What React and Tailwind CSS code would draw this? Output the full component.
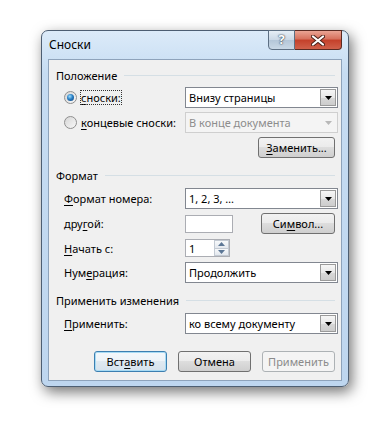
import React from 'react';

const Ul = ({ children }) => <span className="underline underline-offset-[2px]">{children}</span>;

const Arrow = ({ color = '#000' }) => (
  <svg width="7" height="4" viewBox="0 0 7 4"><path d="M0 0h7L3.5 4z" fill={color} /></svg>
);

const Select = ({ value, disabled }) => (
  <div
    className={`flex h-[21px] w-[153px] items-stretch border ${
      disabled ? 'border-[#cfcfcf] bg-[#f4f4f4] text-[#8d8d8d]' : 'border-[#828790] bg-white text-black'
    }`}
  >
    <div className="flex flex-1 items-center pl-[3px] leading-none">{value}</div>
    <div
      className={`m-[1px] flex w-[16px] items-center justify-center border ${
        disabled
          ? 'border-[#f4f4f4]'
          : 'border-[#9a9a9a] bg-[linear-gradient(180deg,#f6f6f6_0%,#e8e8e8_50%,#d8d8d8_51%,#cdcdcd_100%)]'
      }`}
    >
      <Arrow color={disabled ? '#b8b8b8' : '#000'} />
    </div>
  </div>
);

const Btn = ({ children, primary, disabled, w = 'w-[73px]' }) => {
  let look =
    'border-[#707070] bg-[linear-gradient(180deg,#f2f2f2_0%,#ebebeb_49%,#dddddd_50%,#cfcfcf_100%)] text-black';
  if (primary)
    look =
      'border-[#3c7fb1] bg-[linear-gradient(180deg,#f4f8fb_0%,#edf3f8_49%,#dfe9f1_50%,#d6e2ec_100%)] shadow-[inset_0_0_0_1px_#a8dbf4] text-black';
  if (disabled) look = 'border-[#adb2b5] bg-[#f4f4f4] text-[#8b8b8b]';
  return (
    <div className={`flex h-[21px] ${w} items-center justify-center rounded-[3px] border leading-none ${look}`}>
      {children}
    </div>
  );
};

const Radio = ({ checked, children }) => (
  <div className="flex items-center gap-[4px]">
    <div className="flex h-[13px] w-[13px] items-center justify-center rounded-full border border-[#8f8f8f] bg-[linear-gradient(135deg,#d6d6d6,#f8f8f8)]">
      {checked && (
        <div className="h-[7px] w-[7px] rounded-full bg-[radial-gradient(circle_at_40%_35%,#9fe0ff_0%,#2a7fc4_45%,#0c3d78_100%)]" />
      )}
    </div>
    {children}
  </div>
);

const GroupTitle = ({ children, className }) => (
  <div className={`flex h-[16px] items-center pl-[7px] pr-[6px] ${className}`}>
    <span className="leading-none">{children}</span>
    <div className="ml-[7px] h-px flex-1 bg-[#d5dfe5]" />
  </div>
);

const Row = ({ label, children, className = '' }) => (
  <div className={`flex items-center pl-[15px] ${className}`}>
    <div className="w-[121px] leading-none">{label}</div>
    {children}
  </div>
);

export default function App() {
  return (
    <div className="h-[425px] w-[386px] overflow-hidden bg-white pl-[41px] pt-[30px] font-['Noto_Sans',sans-serif] text-[11px] text-black">
      <div className="flex h-[357px] w-[308px] flex-col rounded-[7px] border border-[#4d5e72] bg-[linear-gradient(180deg,#dcebf9_0%,#c6dcf2_12%,#bed6ef_100%)] px-[6px] pb-[5px] shadow-[3px_5px_14px_rgba(0,0,0,0.55)]">
        <div className="flex h-[28px] justify-between">
          <div className="pl-[1px] pt-[6px] text-[12px] leading-[16px]">Сноски</div>
          <div className="-mt-px flex h-[20px]">
            <div className="flex w-[27px] items-center justify-center rounded-bl-[4px] border border-[#5d6f83] bg-[linear-gradient(180deg,#e6eef6_0%,#cad8e6_50%,#b4c6d8_51%,#c9d8e6_100%)] text-[13px] font-bold text-white [text-shadow:0_0_2px_#2b3a4a,0_0_1px_#2b3a4a]">
              ?
            </div>
            <div className="flex w-[47px] items-center justify-center rounded-br-[4px] border border-l-0 border-[#5a2a22] bg-[linear-gradient(180deg,#eaa494_0%,#d6705c_45%,#c4402a_50%,#d0604a_100%)]">
              <svg width="14" height="11" viewBox="0 0 14 11">
                <path d="M2 1.5l10 8M12 1.5l-10 8" stroke="#4a2018" strokeWidth="4" strokeLinecap="round" />
                <path d="M2 1.5l10 8M12 1.5l-10 8" stroke="#fff" strokeWidth="2.2" strokeLinecap="round" />
              </svg>
            </div>
          </div>
        </div>

        <div className="flex flex-1 flex-col border border-[#8ea3bb] bg-[#f0f0f0]">
          <GroupTitle className="mt-[7px]">Положение</GroupTitle>
          <Row
            className="mt-[4px] h-[21px]"
            label={
              <Radio checked>
                <span className="outline-1 outline-dotted outline-[#333] outline-offset-[0px] leading-[13px]">
                  <Ul>с</Ul>носки:
                </span>
              </Radio>
            }
          >
            <Select value="Внизу страницы" />
          </Row>
          <Row
            className="mt-[4px] h-[21px]"
            label={
              <Radio>
                <span>
                  <Ul>к</Ul>онцевые сноски:
                </span>
              </Radio>
            }
          >
            <Select value="В конце документа" disabled />
          </Row>
          <div className="mt-[4px] flex justify-end pr-[6px]">
            <Btn w="w-[77px]">
              <span>
                <Ul>З</Ul>аменить...
              </span>
            </Btn>
          </div>

          <GroupTitle className="mt-[9px]">Формат</GroupTitle>
          <Row
            className="mt-[5px] h-[21px]"
            label={
              <span>
                <Ul>Ф</Ul>ормат номера:
              </span>
            }
          >
            <Select value="1, 2, 3, …" />
          </Row>
          <Row
            className="mt-[4px] h-[21px]"
            label={
              <span>
                дру<Ul>г</Ul>ой:
              </span>
            }
          >
            <div className="h-[18px] w-[48px] border border-[#abadb3] bg-white" />
            <div className="ml-auto pr-[6px]">
              <Btn w="w-[74px]">
                <span>
                  Си<Ul>м</Ul>вол...
                </span>
              </Btn>
            </div>
          </Row>
          <Row
            className="mt-[5px] h-[18px]"
            label={
              <span>
                <Ul>Н</Ul>ачать с:
              </span>
            }
          >
            <div className="flex h-[18px] w-[45px] border border-[#abadb3] bg-white">
              <div className="flex flex-1 items-center pl-[3px] leading-none">1</div>
              <div className="flex w-[15px] flex-col">
                <div className="flex flex-1 items-center justify-center border border-[#c3cad3] bg-[linear-gradient(180deg,#f7f9fb,#e3e8ee)]">
                  <svg width="7" height="4" viewBox="0 0 7 4"><path d="M0 4h7L3.5 0z" fill="#5c7796" /></svg>
                </div>
                <div className="flex flex-1 items-center justify-center border border-t-0 border-[#c3cad3] bg-[linear-gradient(180deg,#f7f9fb,#e3e8ee)]">
                  <svg width="7" height="4" viewBox="0 0 7 4"><path d="M0 0h7L3.5 4z" fill="#5c7796" /></svg>
                </div>
              </div>
            </div>
          </Row>
          <Row
            className="mt-[5px] h-[21px]"
            label={
              <span>
                Нум<Ul>е</Ul>рация:
              </span>
            }
          >
            <Select value="Продолжить" />
          </Row>

          <GroupTitle className="mt-[9px]">Применить изменения</GroupTitle>
          <Row
            className="mt-[5px] h-[21px]"
            label={
              <span>
                <Ul>П</Ul>рименить:
              </span>
            }
          >
            <Select value="ко всему документу" />
          </Row>

          <div className="mt-[17px] flex justify-end gap-[11px] pr-[6px]">
            <Btn primary>
              <span>
                Вст<Ul>а</Ul>вить
              </span>
            </Btn>
            <Btn>Отмена</Btn>
            <Btn disabled>Применить</Btn>
          </div>
        </div>
      </div>
    </div>
  );
}
